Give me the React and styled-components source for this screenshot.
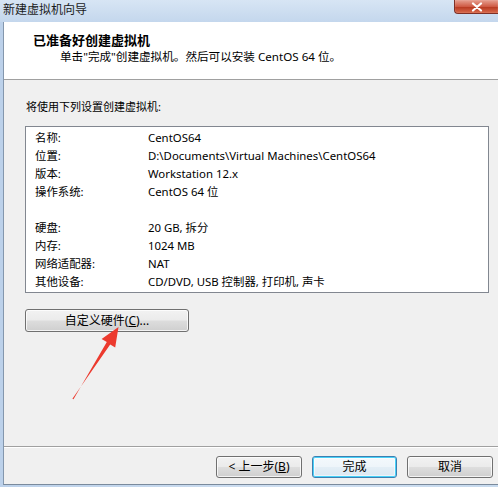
import React from "react";
import styled, { createGlobalStyle, css } from "styled-components";

const GlobalStyle = createGlobalStyle`
  html, body {
    margin: 0;
    padding: 0;
    background: #c6d9ee;
  }
  body {
    font-family: "Noto Sans", "Noto Sans CJK SC", sans-serif;
  }
`;

const Window = styled.div`
  position: relative;
  width: 498px;
  height: 487px;
  display: flex;
  flex-direction: column;
  background: linear-gradient(to right, #bcd1ea, #cfdff1 60%, #c7daee);
  overflow: hidden;
  padding-bottom: 2px;
  box-sizing: border-box;
`;

const TitleBar = styled.div`
  height: 22px;
  flex: none;
  display: flex;
  align-items: flex-start;
  background: linear-gradient(to bottom, #d7e5f4, #c4d7ed);
`;

const Title = styled.span`
  padding: 2px 0 0 3px;
  font-family: "Noto Sans CJK SC", sans-serif;
  font-size: 12px;
  line-height: 14px;
  color: #1b1b1b;
`;

const CloseButton = styled.div`
  margin-left: auto;
  width: 44px;
  height: 14px;
  display: flex;
  align-items: center;
  justify-content: center;
  box-sizing: border-box;
  border: 1px solid #7e3026;
  border-top: none;
  border-right: none;
  border-bottom-left-radius: 4px;
  background: linear-gradient(to bottom, #e7a091, #cf5b45 50%, #b83a22 55%, #d86a4c);
  box-shadow: inset 0 0 1px rgba(255, 255, 255, 0.6);
`;

const Client = styled.div`
  flex: 1;
  display: flex;
  flex-direction: column;
  margin-left: 3px;
  border-left: 1px solid #8497ad;
  border-bottom: 1px solid #7a8a9c;
  background: #f0f0f0;
  min-height: 0;
`;

const Header = styled.div`
  flex: none;
  height: 47px;
  background: #ffffff;
  border-bottom: 1px solid #a0a0a0;
  padding: 10px 0 0 29px;
`;

const HeaderTitle = styled.div`
  font-family: "Noto Sans CJK SC", sans-serif;
  font-weight: 700;
  font-size: 13px;
  line-height: 16px;
  color: #000;
`;

const HeaderSub = styled.div`
  margin-top: 1px;
  padding-left: 27px;
  font-size: 11.6px;
  line-height: 16px;
  color: #000;
`;

const Body = styled.div`
  flex: 1;
  display: flex;
  flex-direction: column;
  align-items: flex-start;
  padding: 20px 9px 0 21px;
`;

const Intro = styled.div`
  padding-left: 1px;
  font-size: 11px;
  line-height: 14px;
  color: #000;
`;

const ListBox = styled.div`
  align-self: stretch;
  margin-top: 12px;
  background: #ffffff;
  border: 1px solid #828790;
  padding: 2px 0 1px 9px;
`;

const Row = styled.div`
  display: grid;
  grid-template-columns: 113px 1fr;
  height: 18px;
  align-items: center;
  font-size: 11.4px;
  line-height: 14px;
  color: #000;
  white-space: nowrap;
`;

const buttonBase = css`
  display: flex;
  align-items: center;
  justify-content: center;
  box-sizing: border-box;
  border: 1px solid #707070;
  border-radius: 3px;
  background: linear-gradient(to bottom, #f2f2f2 0%, #ebebeb 48%, #dddddd 52%, #cfcfcf 100%);
  box-shadow: inset 0 0 0 1px rgba(255, 255, 255, 0.75);
  font-family: "Noto Sans", "Noto Sans CJK SC", sans-serif;
  font-size: 12px;
  line-height: 14px;
  color: #000;
  padding: 0;
`;

const PushButton = styled.button`
  ${buttonBase}
  width: ${(p) => p.$w}px;
  height: ${(p) => p.$h}px;
  ${(p) =>
    p.$focused &&
    css`
      border-color: #3c7fb1;
      box-shadow: inset 0 0 0 1px #48d1f8, inset 0 0 0 2px rgba(255, 255, 255, 0.5);
      background: linear-gradient(to bottom, #f4f9fc 0%, #eef5fa 48%, #e3eef6 52%, #dbe8f2 100%);
    `}
`;

const CustomizeButton = styled(PushButton)`
  margin-top: 16px;
`;

const Key = styled.u`
  text-decoration: underline;
`;

const Footer = styled.div`
  flex: none;
  display: flex;
  justify-content: flex-end;
  gap: 10px;
  border-top: 1px solid #a0a0a0;
  box-shadow: inset 0 1px 0 #ffffff;
  padding: 9px 5px 6px 0;
`;

const ArrowSvg = styled.svg`
  position: absolute;
  left: 0;
  top: 0;
  pointer-events: none;
`;

const rows = [
  ["名称:", "CentOS64"],
  ["位置:", "D:\\Documents\\Virtual Machines\\CentOS64"],
  ["版本:", "Workstation 12.x"],
  ["操作系统:", "CentOS 64 位"],
  ["", ""],
  ["硬盘:", "20 GB, 拆分"],
  ["内存:", "1024 MB"],
  ["网络适配器:", "NAT"],
  ["其他设备:", "CD/DVD, USB 控制器, 打印机, 声卡"],
];

export default function App() {
  return (
    <>
      <GlobalStyle />
      <Window>
        <TitleBar>
          <Title>新建虚拟机向导</Title>
          <CloseButton>
            <svg width="12" height="10" viewBox="0 0 12 10">
              <path
                d="M2 1.5 L10 8.5 M10 1.5 L2 8.5"
                stroke="#ffffff"
                strokeWidth="2.2"
                strokeLinecap="round"
                fill="none"
              />
            </svg>
          </CloseButton>
        </TitleBar>
        <Client>
          <Header>
            <HeaderTitle>已准备好创建虚拟机</HeaderTitle>
            <HeaderSub>单击"完成"创建虚拟机。然后可以安装 CentOS 64 位。</HeaderSub>
          </Header>
          <Body>
            <Intro>将使用下列设置创建虚拟机:</Intro>
            <ListBox>
              {rows.map(([k, v], i) => (
                <Row key={i}>
                  <span>{k}</span>
                  <span>{v}</span>
                </Row>
              ))}
            </ListBox>
            <CustomizeButton $w={164} $h={23}>
              自定义硬件(<Key>C</Key>)...
            </CustomizeButton>
          </Body>
          <Footer>
            <PushButton $w={86} $h={22}>
              &lt; 上一步(<Key>B</Key>)
            </PushButton>
            <PushButton $w={85} $h={22} $focused>
              完成
            </PushButton>
            <PushButton $w={86} $h={22}>
              取消
            </PushButton>
          </Footer>
        </Client>
        <ArrowSvg width="498" height="487" viewBox="0 0 498 487">
          <polygon
            points="73.5,399.3 106.8,341.9 101.6,338.9 118.5,327 115.2,347.5 110.2,344.6 72.4,398.7"
            fill="#ec3a2e"
          />
        </ArrowSvg>
      </Window>
    </>
  );
}
